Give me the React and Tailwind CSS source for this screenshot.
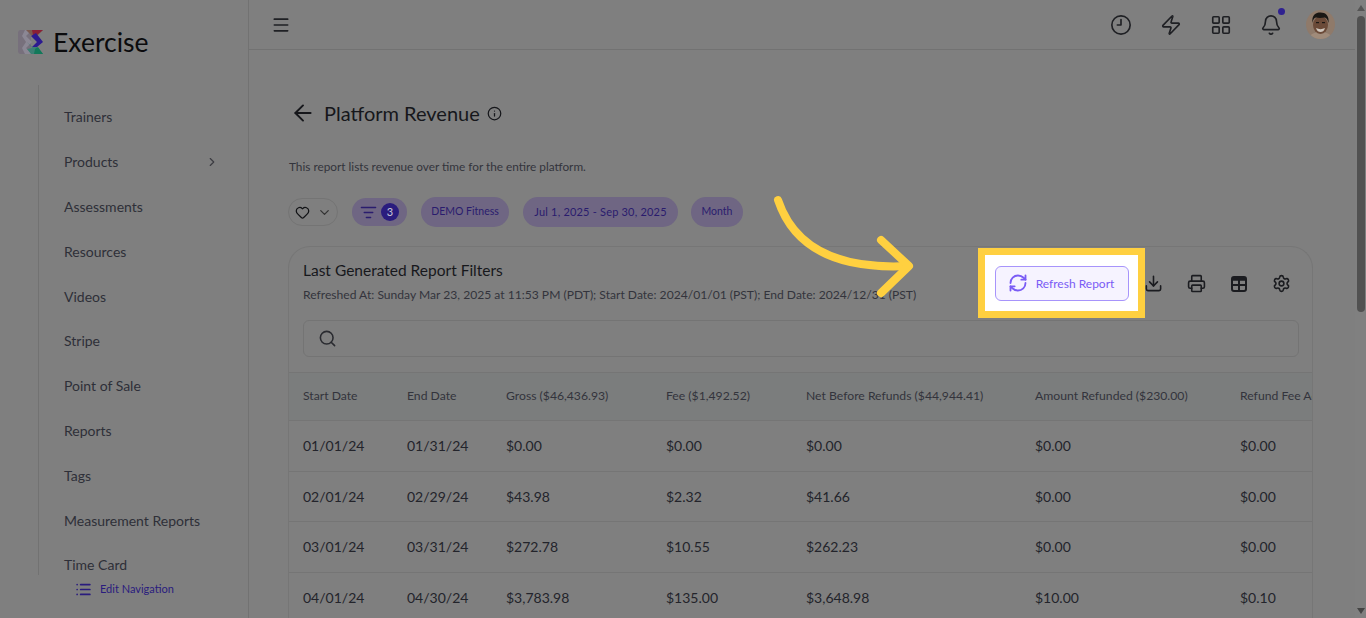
import { ArrowLeft, ChevronDown, ChevronRight, Clock9, Download, Info, LayoutGrid, ListFilter, Menu, Printer, RefreshCw, Search, Settings, Zap, Bell, Heart, List } from 'lucide-react';

const nav = ['Trainers', 'Products', 'Assessments', 'Resources', 'Videos', 'Stripe', 'Point of Sale', 'Reports', 'Tags', 'Measurement Reports', 'Time Card'];

const cols = 'grid grid-cols-[104px_99px_160px_140px_229px_205px_200px]';

const headers = ['Start Date', 'End Date', 'Gross ($46,436.93)', 'Fee ($1,492.52)', 'Net Before Refunds ($44,944.41)', 'Amount Refunded ($230.00)', 'Refund Fee Adjustment'];

const rows = [
  ['01/01/24', '01/31/24', '$0.00', '$0.00', '$0.00', '$0.00', '$0.00'],
  ['02/01/24', '02/29/24', '$43.98', '$2.32', '$41.66', '$0.00', '$0.00'],
  ['03/01/24', '03/31/24', '$272.78', '$10.55', '$262.23', '$0.00', '$0.00'],
  ['04/01/24', '04/30/24', '$3,783.98', '$135.00', '$3,648.98', '$10.00', '$0.10'],
];

const Logo = () => (
  <svg width="26" height="26" viewBox="0 0 26 26" className="shrink-0">
    <rect x="0" y="1" width="13" height="24" rx="3" fill="#77707c" />
    <path d="M7 1h7l-6 6 6 6-6 6 6 6H7l-3-6 4-6-4-6z" fill="#8b8794" />
    <path d="M8 1h17l-6 6H14z" fill="#7a5a50" />
    <path d="M14 1h11l-6 5h-4z" fill="#8a2036" />
    <path d="M13 7l5-3 7 9-6 5h-5l5-5z" fill="#2c1a90" />
    <path d="M9 13l5 5h5l6 7H13l-4-5 5-1z" fill="#3c7f74" />
    <path d="M17 20l3-2 5 7h-9z" fill="#12795a" />
  </svg>
);

const Avatar = () => (
  <svg width="29" height="29" viewBox="0 0 29 29" className="rounded-full">
    <rect width="29" height="29" fill="#8f7a6a" />
    <path d="M3 29c1-5 5-7 11.500-7S25 24 26 29z" fill="#a08b7a" />
    <ellipse cx="14.500" cy="15" rx="7.500" ry="9" fill="#6b4a38" />
    <path d="M6.500 13c-1-8 3-10.500 8-10.500s9 3 8 10.500c-1-4-2-5-4-5.500-3 .5-6 .5-8.500 0-2 .5-3 2-3.500 5.500z" fill="#1b1714" />
    <path d="M10 18c3 1.500 6 1.500 9 0-1 3-2.500 4-4.500 4S11 21 10 18z" fill="#cfc6bd" />
    <rect x="10" y="12" width="3" height="1.200" fill="#1b1714" />
    <rect x="16" y="12" width="3" height="1.200" fill="#1b1714" />
  </svg>
);

// table layout icon with the filled header row
const TableIcon = () => (
  <svg width="18" height="18" viewBox="0 0 18 18" fill="none" stroke="currentColor" strokeWidth="2">
    <rect x="2" y="2" width="14" height="14" rx="2" />
    <path d="M2 4.500h14M2 10h14M9 4.500V16" />
    <rect x="2" y="2" width="14" height="3.500" fill="currentColor" stroke="none" />
  </svg>
);

const Pill = ({ className, children }) => (
  <span className={`flex h-[30px] items-center justify-center rounded-full bg-[#6f6683] text-[#2a1c6e] ${className}`}>{children}</span>
);

export default function App() {
  return (
    <div className="relative flex h-[618px] overflow-hidden bg-[#7f7f7f] font-['Lato','Liberation_Sans',sans-serif] text-[#1e1f24]">
      {/* sidebar */}
      <aside className="relative flex w-[249px] shrink-0 flex-col border-r border-[#727272]">
        <div className="flex h-[85px] items-center gap-[9px] pb-[1px] pl-[18px]">
          <Logo />
          <span className="text-[26.500px] leading-none text-[#0b0b0d]">Exercise</span>
        </div>
        <div className="ml-[38px] h-[490px] overflow-hidden border-l border-[#727272] pt-[9.500px]">
          {nav.map((item) => (
            <div key={item} className="flex h-[44.800px] items-center justify-between pl-[25px] pr-[29px] text-[14px] text-[#2e2f38]">
              <span>{item}</span>
              {item === 'Products' && <ChevronRight size={14} className="text-[#3c3c42]" />}
            </div>
          ))}
        </div>
        <div className="flex items-center gap-[8px] pl-[75px] pt-[6px] text-[11px] text-[#2a1c7e]">
          <List size={17} strokeWidth={2.4} />
          <span>Edit Navigation</span>
        </div>
      </aside>

      {/* main */}
      <div className="flex min-w-0 flex-1 flex-col">
        <header className="flex h-[50px] shrink-0 items-center justify-between border-b border-[#727272] pl-[22px] pr-[20px]">
          <Menu size={20} className="text-[#1f2024]" />
          <div className="flex items-center gap-[28px] text-[#1f2024]">
            <Clock9 size={22} strokeWidth={1.8} />
            <Zap size={22} strokeWidth={1.8} />
            <LayoutGrid size={22} strokeWidth={1.8} />
            <div className="relative">
              <Bell size={22} strokeWidth={1.8} />
              <span className="absolute -right-[3px] -top-[6px] h-[7px] w-[7px] rounded-full bg-[#2f2190]" />
            </div>
            <div className="-ml-[3.500px] flex">
              <Avatar />
            </div>
          </div>
        </header>

        <div className="pl-[39px] pr-[42px]">
          <div className="flex items-center pt-[50px] text-[#16171b]">
            <ArrowLeft size={26} strokeWidth={1.8} className="mr-[8px] ml-[2px]" />
            <h1 className="text-[20px] leading-[26px]">Platform Revenue</h1>
            <Info size={15} className="ml-[7px]" />
          </div>
          <p className="mt-[32px] ml-px text-[11.800px] leading-[18px] text-[#33343c]">This report lists revenue over time for the entire platform.</p>

          <div className="mt-[21px] flex items-center gap-[14px]">
            <div className="flex h-[28px] w-[50px] items-center justify-center gap-[7px] rounded-full border border-[#747474] text-[#121316]">
              <Heart size={15} />
              <ChevronDown size={15} className="text-[#333]" />
            </div>
            <span className="flex h-[28px] w-[55px] items-center justify-center gap-[4px] rounded-full bg-[#6f6683] text-[#2a1c6e]">
              <ListFilter size={17} />
              <span className="flex h-[18px] w-[18px] items-center justify-center rounded-full bg-[#2a1c7e] text-[11px] text-[#c8c8d8]">3</span>
            </span>
            <Pill className="w-[88px] text-[10.500px]">DEMO Fitness</Pill>
            <Pill className="w-[155px] text-[11px] tracking-[0.2px]">Jul 1, 2025 - Sep 30, 2025</Pill>
            <Pill className="-ml-px w-[52px] text-[10.500px]">Month</Pill>
          </div>

          <section className="mt-[19px] overflow-hidden rounded-t-[22px] border border-b-0 border-[#767676]">
            <div className="flex items-start justify-between pl-[14px] pr-[21px]">
              <div className="pt-[13px]">
                <h2 className="text-[15.500px] leading-[20px] text-[#17181c]">Last Generated Report Filters</h2>
                <p className="mt-[7px] text-[12.100px] leading-[16px] text-[#33343c]">Refreshed At: Sunday Mar 23, 2025 at 11:53 PM (PDT); Start Date: 2024/01/01 (PST); End Date: 2024/12/31 (PST)</p>
              </div>
              <div className="flex items-center gap-[24px] pt-[27px] text-[#1b1c20]">
                <Download size={19} strokeWidth={2} />
                <Printer size={19} strokeWidth={2} />
                <TableIcon />
                <Settings size={19} strokeWidth={2} />
              </div>
            </div>
            <div className="ml-[14px] mr-[13px] mt-[17px] flex h-[37px] items-center rounded-[6px] border border-[#747474] pl-[14px]">
              <Search size={19} className="text-[#2a2b30]" />
            </div>
            <div className={`${cols} mt-[15px] h-[49px] items-center border-y border-[#757575] bg-[#7b7d7d] pl-[14px] text-[12.200px] text-[#33343c]`}>
              {headers.map((h) => (
                <span key={h} className="whitespace-nowrap">{h}</span>
              ))}
            </div>
            {rows.map((r) => (
              <div key={r[0]} className={`${cols} h-[50.500px] items-center border-b border-[#757575] pl-[14px] text-[14px] text-[#23242b]`}>
                {r.map((v, i) => (
                  <span key={i}>{v}</span>
                ))}
              </div>
            ))}
          </section>
        </div>
      </div>

      {/* scrollbar */}
      <div className="flex w-[11px] shrink-0 flex-col items-center bg-[#808080] pt-[5px]">
        <span className="h-0 w-0 border-x-[4px] border-b-[6px] border-x-transparent border-b-[#555]" />
        <span className="mt-[5px] h-[296px] w-[8px] rounded-full bg-[#515151]" />
        <span className="mt-auto mb-[4px] h-0 w-0 border-x-[4px] border-t-[6px] border-x-transparent border-t-[#444]" />
      </div>

      {/* tutorial highlight */}
      <div className="absolute left-[978px] top-[248px] flex h-[70px] w-[167px] items-center justify-center border-[7px] border-[#ffd040] bg-white">
        <div className="flex h-[35px] w-[134px] items-center justify-center gap-[8px] rounded-[6px] border border-[#a794fb] bg-[#f6f3ff] pr-px text-[12px] text-[#7a5cf5]">
          <RefreshCw size={20} strokeWidth={2.2} />
          <span className="pt-px">Refresh Report</span>
        </div>
      </div>
      <svg className="absolute left-[770px] top-[190px]" width="150" height="110" viewBox="0 0 150 110" fill="none" stroke="#ffd040" strokeWidth="8" strokeLinecap="round" strokeLinejoin="round">
        <path d="M8 10C22 52 60 80 138 76" />
        <path d="M111 50L139 76L111 103" />
      </svg>
    </div>
  );
}
